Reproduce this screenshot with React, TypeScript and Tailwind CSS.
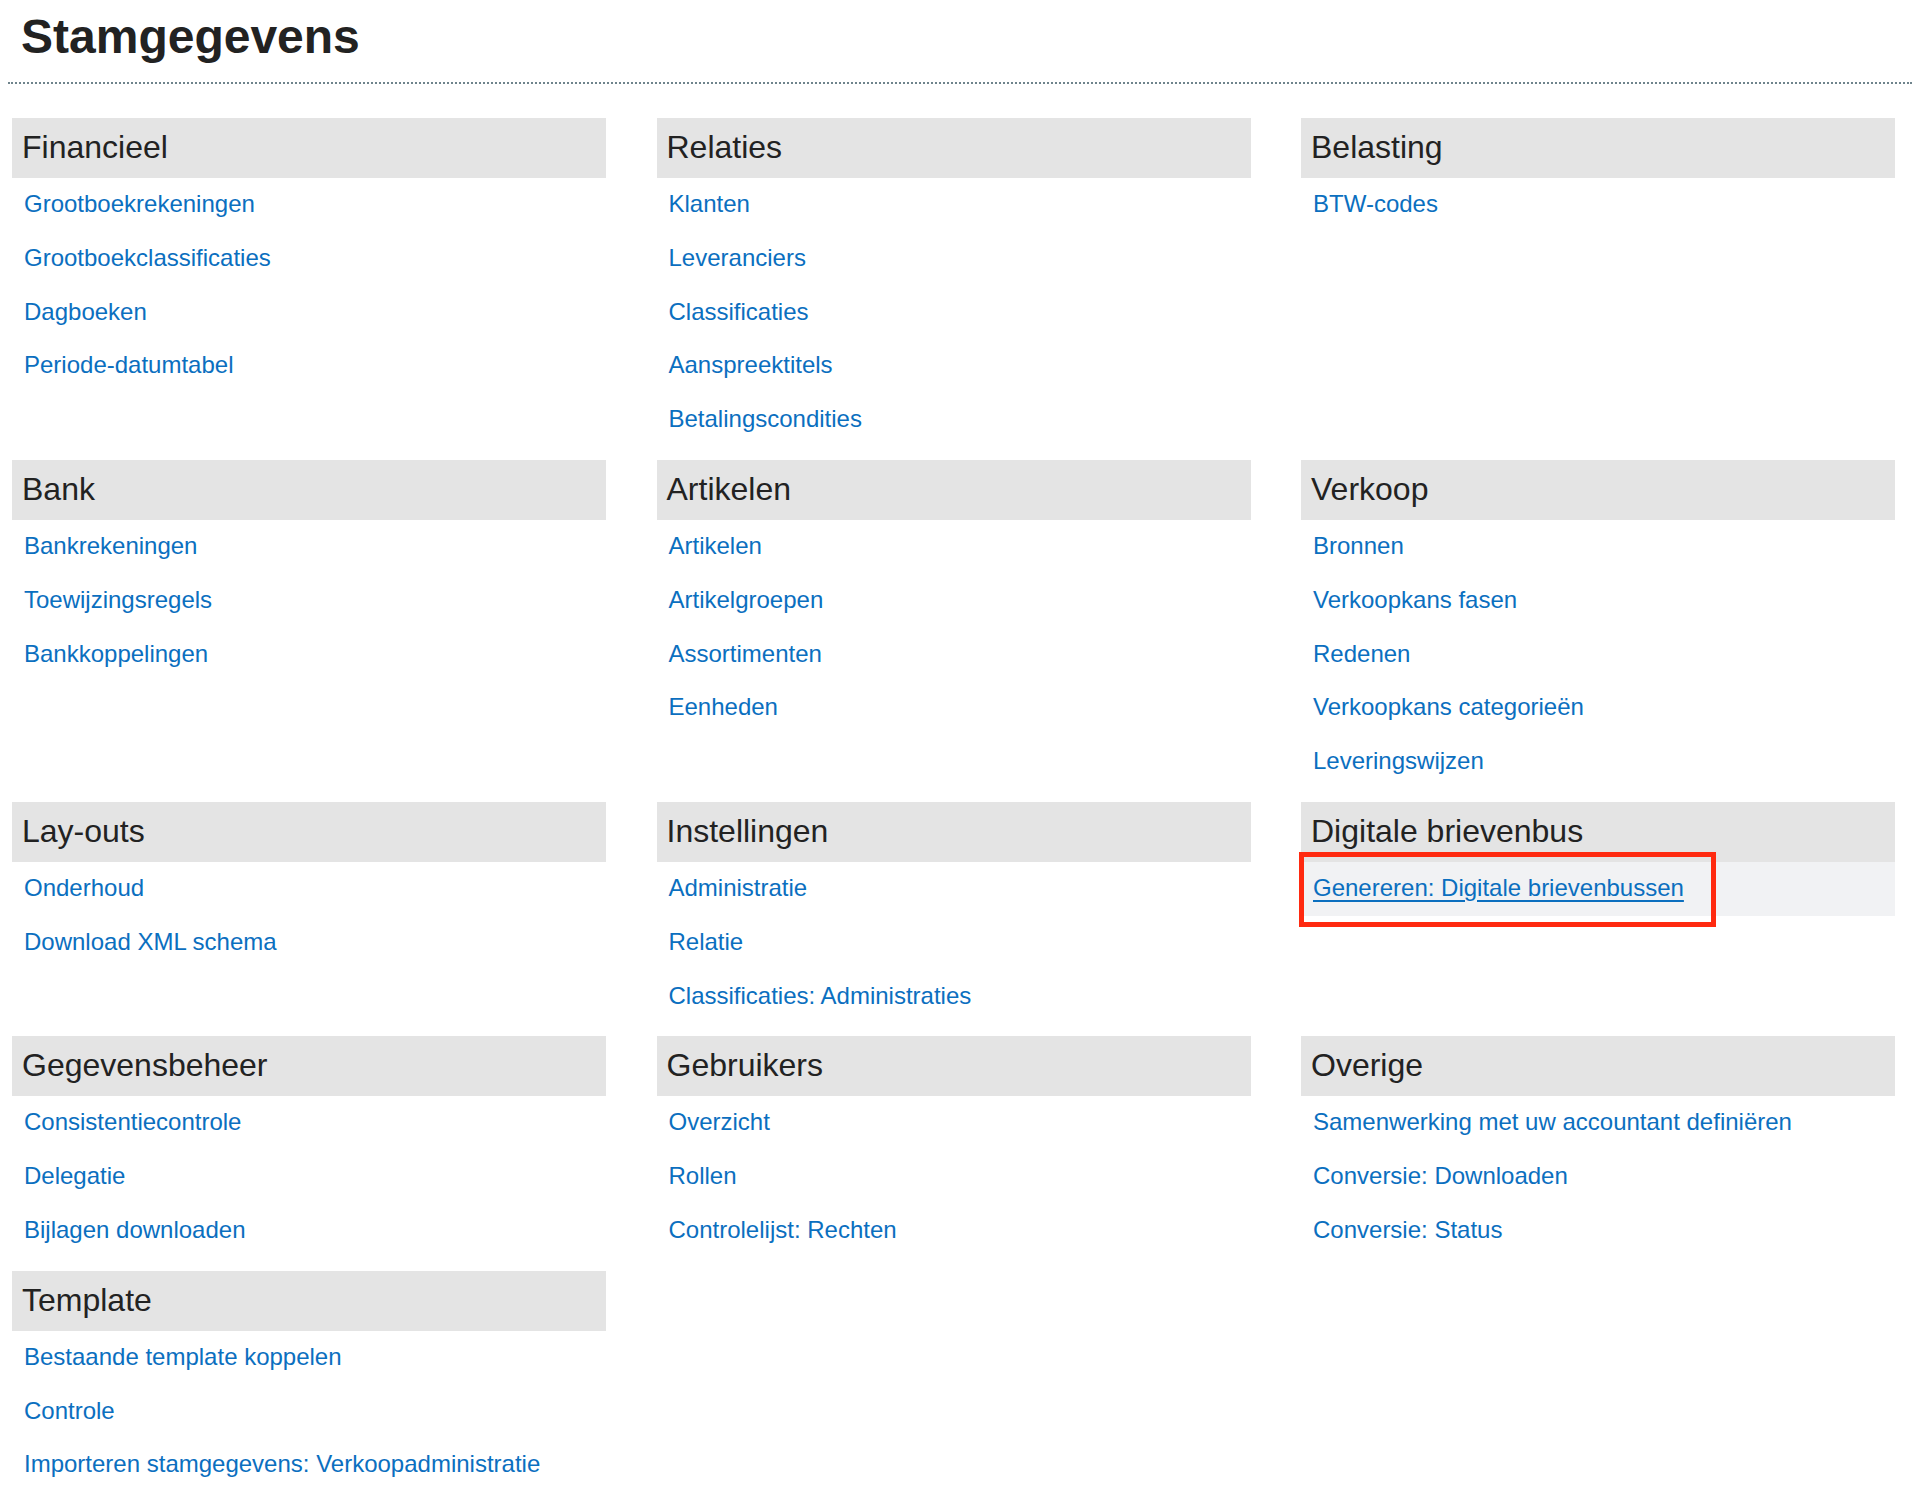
import React from "react";

type Section = { title: string; links: string[]; highlight?: boolean };

const sections: Section[] = [
  { title: "Financieel", links: ["Grootboekrekeningen", "Grootboekclassificaties", "Dagboeken", "Periode-datumtabel"] },
  { title: "Relaties", links: ["Klanten", "Leveranciers", "Classificaties", "Aanspreektitels", "Betalingscondities"] },
  { title: "Belasting", links: ["BTW-codes"] },
  { title: "Bank", links: ["Bankrekeningen", "Toewijzingsregels", "Bankkoppelingen"] },
  { title: "Artikelen", links: ["Artikelen", "Artikelgroepen", "Assortimenten", "Eenheden"] },
  { title: "Verkoop", links: ["Bronnen", "Verkoopkans fasen", "Redenen", "Verkoopkans categorieën", "Leveringswijzen"] },
  { title: "Lay-outs", links: ["Onderhoud", "Download XML schema"] },
  { title: "Instellingen", links: ["Administratie", "Relatie", "Classificaties: Administraties"] },
  { title: "Digitale brievenbus", links: ["Genereren: Digitale brievenbussen"], highlight: true },
  { title: "Gegevensbeheer", links: ["Consistentiecontrole", "Delegatie", "Bijlagen downloaden"] },
  { title: "Gebruikers", links: ["Overzicht", "Rollen", "Controlelijst: Rechten"] },
  { title: "Overige", links: ["Samenwerking met uw accountant definiëren", "Conversie: Downloaden", "Conversie: Status"] },
  { title: "Template", links: ["Bestaande template koppelen", "Controle", "Importeren stamgegevens: Verkoopadministratie"] },
];

function SectionBlock({ s }: { s: Section }) {
  return (
    <div className="relative mb-[13px]">
      <div className="h-[60px] bg-[#e4e4e4] pl-[10px] text-[32px] leading-[59px] text-[#222222]">{s.title}</div>
      {s.links.map((l) => (
        <div
          key={l}
          className={
            s.highlight
              ? "h-[53.8px] bg-[#f1f2f4] pl-[12px] pt-[11px] text-[24px] leading-[30px]"
              : "h-[53.8px] pl-[12px] pt-[11px] text-[24px] leading-[30px]"
          }
        >
          <a
            href="#"
            className={
              s.highlight
                ? "text-[#0b6fbf] underline decoration-[2px] underline-offset-[4px]"
                : "text-[#0b6fbf] no-underline"
            }
          >
            {l}
          </a>
        </div>
      ))}
      {s.highlight && (
        <div className="pointer-events-none absolute left-[-2px] top-[50px] h-[75px] w-[417px] border-[5px] border-[#ff2a10]" />
      )}
    </div>
  );
}

export default function App() {
  return (
    <div
      className="h-[1486px] w-[1912px] overflow-hidden bg-white"
      style={{ fontFamily: '"Liberation Sans", Arial, Helvetica, sans-serif' }}
    >
      <div className="ml-[8px] border-b-2 border-dotted border-[#6f848c] pb-[17px] pt-[9px] pl-[13px]">
        <h1 className="text-[48px] font-bold leading-[56px] text-[#222222]">Stamgegevens</h1>
      </div>
      <div className="mt-[34px] grid grid-cols-3 items-start gap-x-[50.5px] pl-[12px] pr-[17px]">
        {sections.map((s) => (
          <SectionBlock key={s.title} s={s} />
        ))}
      </div>
    </div>
  );
}
